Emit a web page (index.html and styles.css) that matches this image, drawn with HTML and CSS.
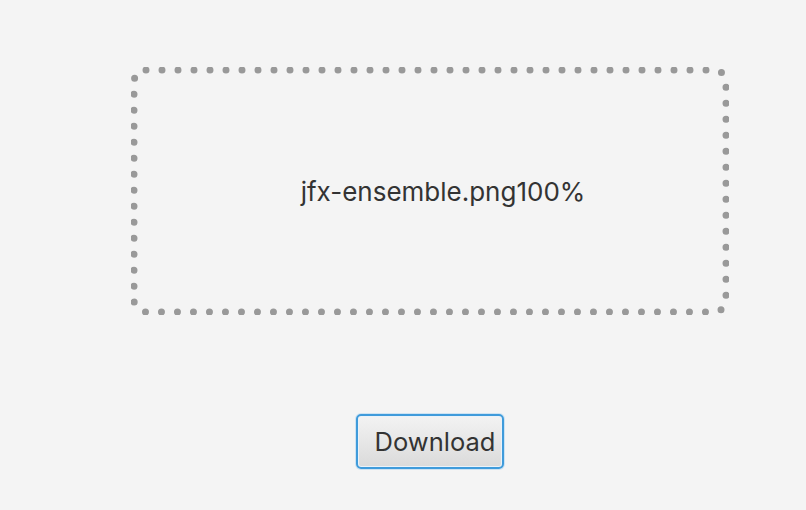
FILE: index.html
```html
<!DOCTYPE html>
<html>
<head>
<meta charset="utf-8">
<link rel="stylesheet" href="styles.css">
</head>
<body>
<div class="page">
  <div class="drop">
    <svg class="dots" width="598" height="248" viewBox="0 0 598 248">
      <rect x="3" y="3" width="592" height="242" rx="12" ry="12" fill="none" stroke="#999999" stroke-width="7" stroke-linecap="round" stroke-dasharray="0 16"/>
    </svg>
    <span class="label">jfx-ensemble.png100%</span>
  </div>
  <button class="btn">Download</button>
</div>
</body>
</html>
```

FILE: styles.css
```css
html, body {
  margin: 0;
  padding: 0;
  background: #f4f4f4;
}
.page {
  width: 806px;
  height: 510px;
  box-sizing: border-box;
  padding: 67px 0 0 54px;
  display: flex;
  flex-direction: column;
  align-items: center;
  font-family: Inter, "Open Sans", "Liberation Sans", sans-serif;
  color: #333333;
}
.drop {
  position: relative;
  width: 598px;
  height: 248px;
  display: flex;
  align-items: center;
  justify-content: center;
}
.dots {
  position: absolute;
  left: 0;
  top: 0;
}
.label {
  font-size: 26px;
  padding-left: 26px;
}
.btn {
  margin-top: 99px;
  width: 148px;
  height: 55px;
  box-sizing: border-box;
  border: 2px solid #3f9bdb;
  border-radius: 5px;
  box-shadow: 0 0 0 1px #cde3f3, inset 0 0 0 1px #eaf2f9;
  background: linear-gradient(#f3f3f3, #dadada);
  font-family: Inter, "Open Sans", "Liberation Sans", sans-serif;
  font-size: 25.5px;
  color: #333333;
  padding: 0 0 0 10px;
}
```
